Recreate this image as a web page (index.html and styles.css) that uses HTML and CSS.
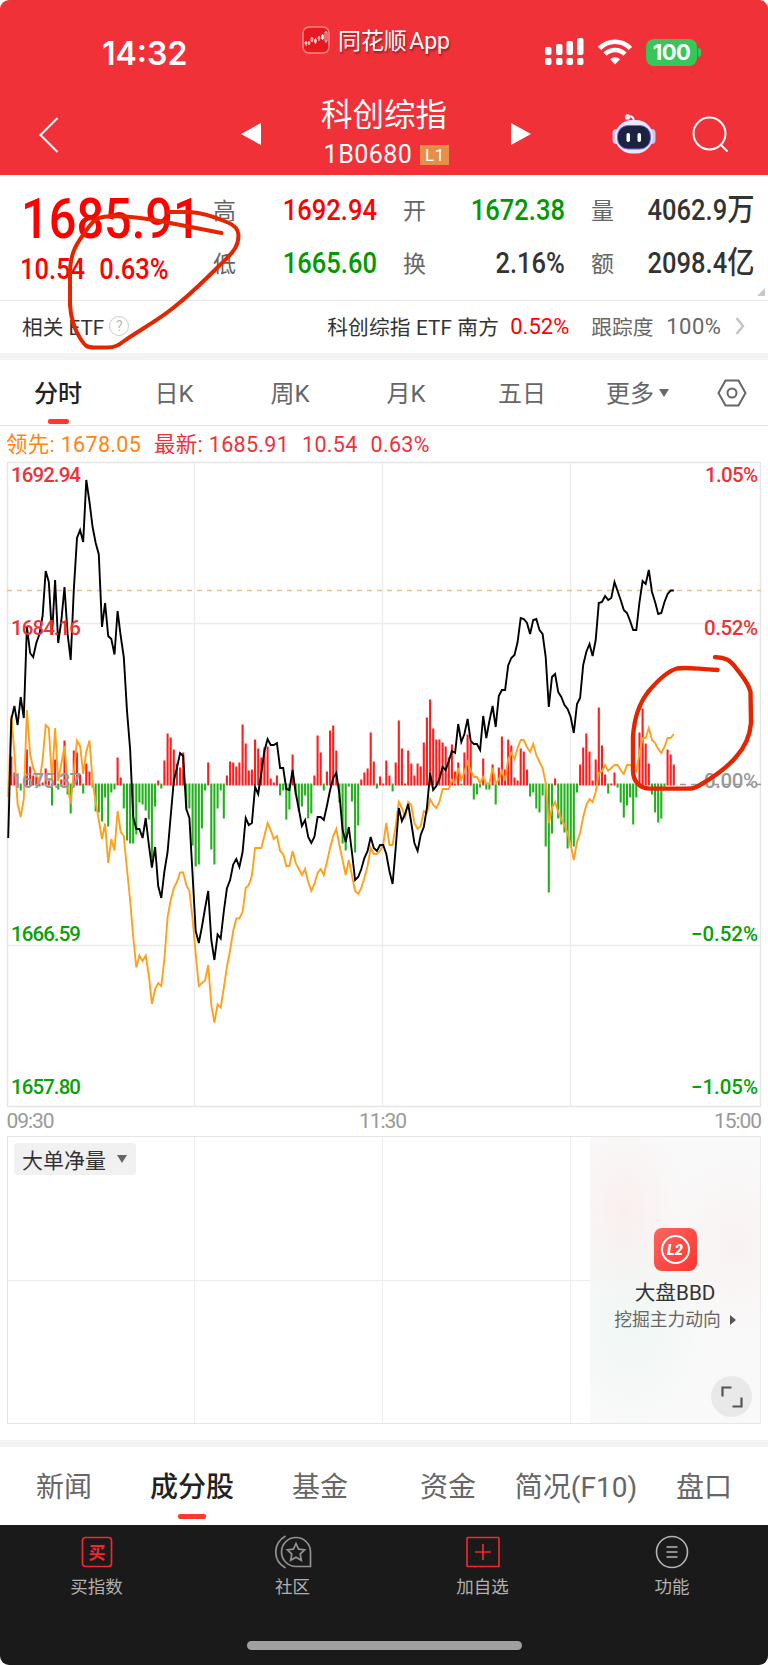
FILE: index.html
```
<!DOCTYPE html>
<html lang="zh-CN">
<head>
    <meta charset="UTF-8">
    <meta name="viewport" content="width=device-width, initial-scale=1.0">
    <title>科创综指 1B0680</title>
    <link rel="stylesheet" href="styles.css">
</head>
<body>
<div class="page">
    <header class="header">
        <div class="status-bar">
            <div class="clock"><span>14:32</span></div>
            <div class="app-name">
                <svg width="28" height="28" viewBox="0 0 28 28">
                    <rect x="1" y="1" width="26" height="26" rx="6" fill="#e5191f" stroke="#ff8587" stroke-width="1.5"/>
                    <g stroke="#fff" stroke-width=".7">
                        <path d="M4 15v5M7 15v4M10 11v5M13.500 12v6M17 10v5M20.500 8v6M24 5v12"/>
                        <path d="M3 16h1.500v2H3zM12.700 13.500h1.500v3h-1.500zM19.800 9h1.500v4h-1.500z" fill="#fff"/>
                        <path d="M6 16h1.800v2H6zM9 12h1.800v3H9zM16 11h1.800v2H16zM23 6h2v9h-2z" fill="#e5191f"/>
                    </g>
                </svg>
                <span>同花顺 App</span>
            </div>
            <div class="status-icons">
                <svg width="39" height="28" viewBox="0 0 39 28" fill="#fff">
                    <rect x="0" y="9" width="6.500" height="8" rx="2"/>
                    <rect x="11" y="6" width="6.500" height="11" rx="2"/>
                    <rect x="21.500" y="3" width="6.500" height="14" rx="2"/>
                    <rect x="32" y="0" width="6.500" height="17" rx="2"/>
                    <rect x="0" y="20" width="6.500" height="7" rx="2"/>
                    <rect x="11" y="20" width="6.500" height="7" rx="2"/>
                    <rect x="21.500" y="20" width="6.500" height="7" rx="2"/>
                    <rect x="32" y="20" width="6.500" height="7" rx="2"/>
                </svg>
                <svg width="34" height="26" viewBox="0 0 34 26" fill="none" stroke="#fff" stroke-width="4.600">
                    <path d="M1.500 9.500C10 .5 24 .5 32.500 9.500"/>
                    <path d="M7 15.200c5.500-5.600 14.500-5.600 20 0"/>
                    <path d="M17 25.500l-5-5.200c2.600-2.900 7.400-2.900 10 0z" fill="#fff" stroke="none"/>
                </svg>
                <div class="battery"><span>100</span></div>
            </div>
        </div>
        <div class="nav-bar">
            <svg class="back" width="20" height="36" viewBox="0 0 20 36" fill="none" stroke="#fff" stroke-width="2"><path d="M18.500 1L1.500 18l17 17"/></svg>
            <svg class="prev" width="20" height="22" viewBox="0 0 20 22" fill="#fff"><path d="M20 0v22L0 11z"/></svg>
            <div class="stock-title">
                <h1>科创综指</h1>
                <div class="stock-code">1B0680 <span>L1</span></div>
            </div>
            <svg class="next" width="20" height="22" viewBox="0 0 20 22" fill="#fff"><path d="M0 0v22l20-11z"/></svg>
            <svg class="robot" width="44" height="40" viewBox="0 0 44 40">
                <path d="M15 2.500c5-1 7 1 7 5" fill="none" stroke="#f1eeff" stroke-width="2"/>
                <circle cx="15.500" cy="3" r="2.700" fill="#f1eeff"/>
                <rect x="0.500" y="15" width="8" height="15" rx="4" fill="#c9c6f3"/>
                <rect x="35.500" y="15" width="8" height="15" rx="4" fill="#c9c6f3"/>
                <rect x="3" y="6" width="38" height="33.500" rx="17" fill="#e9e8ff"/>
                <rect x="5.500" y="11.500" width="33" height="23.500" rx="10.500" fill="#1b2340" stroke="#7b62e8" stroke-width="1"/>
                <rect x="14.500" y="19" width="3.500" height="9" rx="1.700" fill="#fff"/>
                <rect x="25.500" y="19" width="3.500" height="9" rx="1.700" fill="#fff"/>
            </svg>
            <svg class="search" width="37" height="37" viewBox="0 0 37 37" fill="none" stroke="#fff" stroke-width="2"><circle cx="17.500" cy="17.500" r="16"/><path d="M28.500 28.500l7 7"/></svg>
        </div>
    </header>

    <section class="quote">
        <div class="price">
            <div class="price-now num">1685.91</div>
            <div class="price-change"><span class="num">10.54</span><span class="num">0.63%</span></div>
        </div>
        <dl class="stats">
            <div><dt>高</dt><dd class="num up">1692.94</dd></div>
            <div><dt>开</dt><dd class="num down">1672.38</dd></div>
            <div><dt>量</dt><dd class="num">4062.9<b>万</b></dd></div>
            <div><dt>低</dt><dd class="num down">1665.60</dd></div>
            <div><dt>换</dt><dd class="num">2.16%</dd></div>
            <div><dt>额</dt><dd class="num">2098.4<b>亿</b></dd></div>
        </dl>
        <i class="corner"></i>
    </section>

    <section class="etf">
        <span>相关 ETF</span>
        <span class="help">?</span>
        <span class="etf-name">科创综指 ETF 南方</span>
        <span class="etf-rate">0.52%</span>
        <span class="etf-track">跟踪度</span>
        <span class="etf-full">100%</span>
        <svg width="10" height="18" viewBox="0 0 10 18" fill="none" stroke="#c4c4c4" stroke-width="2.500"><path d="M1.500 1l6.500 8-6.500 8"/></svg>
    </section>

    <nav class="period-tabs">
        <span class="active">分时</span>
        <span>日K</span>
        <span>周K</span>
        <span>月K</span>
        <span>五日</span>
        <span class="more">更多<i class="caret"></i></span>
        <svg width="30" height="28" viewBox="0 0 30 28" fill="none" stroke="#666" stroke-width="2"><path d="M8.500 1.500h13L28.500 14l-7 12.500h-13L1.500 14z"/><circle cx="15" cy="14" r="4.500"/></svg>
    </nav>

    <div class="legend">
        <span class="lead">领先: 1678.05</span>
        <span>最新: 1685.91</span>
        <span>10.54</span>
        <span>0.63%</span>
    </div>

    <svg class="chart" id="chart" width="768" height="675" viewBox="0 461 768 675">
        <path d="M7 623.500h754M7 945.500h754M194.500 462v644M382.500 462v644M570.500 462v644" stroke="#ececec" stroke-width="1.300"/>
        <rect x="7.500" y="462.500" width="753" height="644" fill="none" stroke="#e6e6e6" stroke-width="1.500"/>
        <path d="M7 590.500h754" stroke="#e3c48f" stroke-width="1.300" stroke-dasharray="5 5"/>
        <path d="M680 784.500h81" stroke="#999" stroke-width="1.300" stroke-dasharray="6 5"/>
        <g id="bars" stroke-width="2.100"></g>
        <polyline id="avgLine" fill="none" stroke="#ffa11e" stroke-width="1.900"/>
        <polyline id="priceLine" fill="none" stroke="#000" stroke-width="1.900"/>
        <g class="axis">
            <text x="11" y="482" textLength="70" fill="#eb3338">1692.94</text>
            <text x="11" y="635" textLength="70" fill="#eb3338">1684.16</text>
            <text x="11" y="788" textLength="70" fill="#999">1675.37</text>
            <text x="11" y="941" textLength="70" fill="#09a009">1666.59</text>
            <text x="11" y="1094" textLength="70" fill="#09a009">1657.80</text>
            <text x="705" y="482" textLength="53" fill="#eb3338">1.05%</text>
            <text x="704" y="635" textLength="54" fill="#eb3338">0.52%</text>
            <text x="704" y="788" textLength="54" fill="#999">0.00%</text>
            <text x="691" y="941" textLength="67" fill="#09a009">−0.52%</text>
            <text x="691" y="1094" textLength="67" fill="#09a009">−1.05%</text>
        </g>
        <g class="times">
            <text x="6.500" y="1128" textLength="48">09:30</text>
            <text x="359" y="1128" textLength="48">11:30</text>
            <text x="714" y="1128" textLength="48">15:00</text>
        </g>
    </svg>

    <section class="sub-chart">
        <div class="grid-cell"><button class="indicator">大单净量<i class="caret"></i></button></div>
        <div class="grid-cell"></div>
        <div class="grid-cell"></div>
        <div class="grid-cell"></div>
        <div class="promo">
            <svg width="43" height="43" viewBox="0 0 43 43">
                <defs><linearGradient id="l2" x1="0" y1="0" x2="1" y2="1"><stop offset="0" stop-color="#ff6560"/><stop offset="1" stop-color="#fb352e"/></linearGradient></defs>
                <rect width="43" height="43" rx="8" fill="url(#l2)"/>
                <circle cx="21.500" cy="21.500" r="13.500" fill="none" stroke="#fff" stroke-width="2"/>
                <text x="13" y="27" textLength="16" lengthAdjust="spacingAndGlyphs" class="l2-text">L2</text>
            </svg>
            <strong>大盘BBD</strong>
            <p>挖掘主力动向<i></i></p>
            <div class="expand">
                <svg width="22" height="22" viewBox="0 0 22 22" fill="none" stroke="#555" stroke-width="2.200"><path d="M1.500 10.500v-9h9M20.500 11.500v9h-9"/></svg>
            </div>
        </div>
    </section>

    <nav class="info-tabs">
        <span>新闻</span>
        <span class="active">成分股</span>
        <span>基金</span>
        <span>资金</span>
        <span>简况(F10)</span>
        <span>盘口</span>
    </nav>

    <footer class="footer">
        <div class="toolbar">
            <div>
                <svg width="32" height="34" viewBox="0 0 32 34"><rect x="1.500" y="2.500" width="29" height="29" rx="3" fill="none" stroke="#f0282f" stroke-width="1.700"/><text x="16" y="23.500" text-anchor="middle" class="buy-text">买</text></svg>
                <span>买指数</span>
            </div>
            <div>
                <svg width="38" height="34" viewBox="0 0 38 34" fill="none" stroke="#929292" stroke-width="1.700">
                    <path d="M11.500 1C-1.500 8.500-1.500 25.500 11.500 33"/>
                    <path d="M22 2.500a14.500 14.500 0 1 0 0 29h14.500V17A14.500 14.500 0 0 0 22 2.500z"/>
                    <path d="M22 8.500l2.600 5.600 6 .8-4.400 4.200 1.100 6.200-5.300-3-5.300 3 1.100-6.200-4.400-4.200 6-.8z"/>
                </svg>
                <span>社区</span>
            </div>
            <div>
                <svg width="34" height="34" viewBox="0 0 34 34" fill="none" stroke="#f0282f" stroke-width="1.700"><rect x="1" y="2.500" width="32" height="29" rx="1"/><path d="M17 9v16M9 17h16"/></svg>
                <span>加自选</span>
            </div>
            <div>
                <svg width="34" height="34" viewBox="0 0 34 34" fill="none" stroke="#b5b5b5" stroke-width="1.600"><circle cx="17" cy="17" r="15.500"/><path d="M11.500 12h11M11.500 17h11M11.500 22h11"/></svg>
                <span>功能</span>
            </div>
        </div>
        <div class="home-indicator"></div>
    </footer>

    <!-- hand drawn marks over the page -->
    <svg class="marks" width="768" height="1665" viewBox="0 0 768 1665" fill="none" stroke="#e42600" stroke-linecap="round" stroke-linejoin="round">
        <path stroke-width="4" d="M221.500 233L165 222C140 217 120 216 107 216.500C95 217 91 223 83 235C75 246 70 255 70 275L70 305C71 320 75 330 80 338C85 346 87 347.500 94 347.500L107 347.500C115 347.500 119 345 124 341C135 333 160 319 173 308C186 298 205 280 222 263C236 250 238.500 244 238.500 235C238 228 234 225 228 222.500C215 217 200 212.500 190 212L168 212"/>
        <path stroke-width="4.400" d="M715 657.300C725 657 730 660 736 668C742 676 748 682 750.500 692L751 723C750 736 745 747 736 757C725 770 712 778 700 785C694 788.600 692 788.600 688 788.600L650 788.600C640 788.600 633 782 633 770L633 737C634 720 638 705 648 692C658 680 668 671 677 668.500C685 667 692 668.500 717.500 670"/>
    </svg>
</div>

<script>
// one value per trading minute, in chart coordinates
const price = [
    838, 719.5, 706, 725, 697, 718, 626.5, 653, 657, 643, 634, 616, 571, 582, 635, 580, 643, 621, 587, 634,
    660, 590, 538, 530, 542, 480, 502, 527, 543, 554.5, 627, 603, 636, 639, 654.5, 611, 636, 657, 711, 749,
    817, 829, 829, 838, 818, 844.5, 867.5, 847, 886, 898, 871.5, 852, 816, 781, 768, 753, 756, 809, 818, 875,
    931, 943, 927, 908, 891, 940, 960, 934.5, 938.5, 911.5, 888.5, 880, 864.5, 859, 867, 852, 818, 825, 823, 787,
    794, 773, 751, 739, 745, 745, 743, 768, 768, 789, 790, 770, 793, 809, 826, 820, 837, 843, 837, 817,
    817, 820, 806, 790, 778, 773, 794, 830, 842, 827, 852, 880, 877, 869, 858, 851, 837, 848, 851, 845,
    845, 854, 871, 884, 848, 808, 821, 814, 804, 823, 843, 851, 835, 827, 808, 773, 790, 786, 779, 767,
    770, 761, 751, 753, 724, 742, 734, 719, 741, 744, 744, 750, 716, 738, 721, 706, 727, 696, 690, 690,
    665.5, 658, 655, 642, 618, 619, 623, 634, 620, 619, 630, 634, 657, 707, 677, 674, 692, 697, 705, 709,
    717, 733, 704, 698, 665, 652, 644, 656, 640, 603, 602, 596, 600, 598, 582, 591, 600, 610, 613, 621,
    630, 630, 602, 581, 584, 570, 592, 602, 614, 613, 602, 594, 590.5, 590.5
];
const average = [
    797, 715.5, 753, 804, 817, 799, 710, 754, 768, 775, 781, 760, 725, 728, 780, 728, 781, 764, 746, 785,
    804, 772, 740.5, 746, 774, 751.5, 740.5, 781.5, 802.5, 820, 839, 823.5, 863, 839, 850.5, 811, 832, 836, 869.5, 900,
    936.5, 967.5, 955.5, 961, 955.5, 975, 1004, 989, 983, 986, 959, 917, 900, 888, 882, 872.5, 872.5, 885, 891, 919,
    954, 986, 983, 980.5, 965, 1005, 1022.5, 1004.5, 1007.5, 988, 967, 950.5, 931, 918.5, 918.5, 912, 888, 885, 875.5, 848,
    848, 848, 836, 823, 830, 839, 836, 851, 854, 866, 866, 851, 863, 869, 875, 869, 882, 891, 884, 873,
    869, 875, 862, 848, 836, 829, 845, 860, 875, 860, 875, 891, 894, 888, 878, 866, 848, 854, 854, 851,
    845, 823, 845, 845, 826, 802, 808, 817, 802, 805, 823, 829, 826, 811, 813, 799, 805, 808, 802, 789,
    789, 789, 780, 783, 768, 780, 772, 762, 771, 777, 777, 783, 777, 783.5, 783.5, 768, 783, 780, 771, 780.5,
    759, 753, 759, 748, 740, 740, 747, 752, 744, 755, 762, 768, 783, 823, 808, 802, 812, 819, 825, 833,
    845, 860, 842, 833, 817, 805, 799, 802, 792, 773, 771, 765, 771, 768, 765, 765, 770, 774, 765, 765,
    767, 771, 753, 738, 738, 728, 740, 743, 749, 753, 747, 738, 738, 734
];
const volume = [
    0, 28, 12, 1, -6, 0, 35, 18, 9, 8, -2, 2, 16, 4, -21, 25, -5, 5, 44, -10,
    -29, 34, 32, 10, -9, 21, 13, -3, -27, -28, -37, -13, -42, -8, -5, 27, 7, -24, -56, -59,
    -59, -50, -18, -20, -26, -35, -74, -22, 4, -4, 24, 51, 47, 35, 21, 17, 32, -24, -24, -61,
    -82, -80, -44, -6, 22, -65, -80, -24, -6, -34, 9, 23, 22, 18, 22, 60, 41, 14, 15, 45,
    36, 27, 37, 38, 6, 2, 9, -11, -6, -35, -25, 30, -10, -27, -22, -11, -34, -29, 9, 49,
    32, -6, 13, 54, 59, 34, -18, -59, -66, -2, -17, -68, -41, 5, 12, 16, 52, 23, -4, 8,
    1, 24, 9, -7, 22, 64, 36, 1, 34, 21, 9, 21, 18, 42, 67, 85, 56, 45, 45, 42,
    38, 27, 40, 13, 22, -1, 32, 50, 42, -15, -10, -3, 26, -5, -5, 20, -20, 17, 48, 15,
    45, 39, 7, 4, 36, 33, 15, -12, -8, -24, -28, -11, -62, -108, -49, 6, -34, -40, -48, -64,
    -62, -62, -8, 20, 37, 51, 33, 4, 25, 77, 39, 10, -9, 1, 12, -3, -18, -33, -21, -13,
    -40, -13, 52, 76, 41, 21, -10, -28, -38, -34, -2, 35, 30, 20
];

const baseline = 784.5;
const minuteX = i => (8.2 + i * 3.125).toFixed(1);
const toPoints = values => values.map((y, i) => minuteX(i) + ',' + y).join(' ');

document.getElementById('priceLine').setAttribute('points', toPoints(price));
document.getElementById('avgLine').setAttribute('points', toPoints(average));

const bars = document.getElementById('bars');
volume.forEach((v, i) => {
    if (v === 0) return;
    const bar = document.createElementNS('http://www.w3.org/2000/svg', 'path');
    const start = v > 0 ? baseline + 1 : baseline - 1;
    bar.setAttribute('d', `M${minuteX(i)} ${start}V${baseline - v}`);
    bar.setAttribute('stroke', v > 0 ? '#ff1c1c' : '#22b01c');
    bars.appendChild(bar);
});
</script>
</body>
</html>
```

FILE: styles.css
```
* {
    box-sizing: border-box;
}

body {
    margin: 0;
    background: #fff;
    color: #333;
    font-family: Roboto, "Noto Sans CJK SC", sans-serif;
}

h1, dl, dd, p {
    margin: 0;
}

svg {
    display: block;
    flex: none;
}

.page {
    position: relative;
    width: 768px;
    height: 1665px;
    overflow: hidden;
}

.num {
    font-weight: 500;
    white-space: nowrap;
}

/* header */
.header {
    height: 175px;
    background: #f13138;
    border-radius: 9px 9px 0 0;
    color: #fff;
}

.status-bar {
    display: grid;
    grid-template-columns: 302px 243px 1fr;
    height: 97px;
}

.clock {
    padding: 34px 0 0 102px;
    font: 600 32px/39px Inter, sans-serif;
}

.clock span {
    display: inline-block;
}

.app-name {
    display: flex;
    align-items: center;
    gap: 8px;
    height: 28px;
    margin-top: 26px;
    font-size: 23px;
    letter-spacing: -0.1px;
    word-spacing: -3px;
    text-shadow: 1px 2px 2px rgba(0, 0, 0, 0.4);
    white-space: nowrap;
}

.app-name span {
    margin-top: -2px;
}

.status-icons {
    display: flex;
    align-items: center;
    gap: 14px;
    height: 28px;
    margin-top: 38px;
}

.battery {
    position: relative;
    width: 51px;
    height: 27px;
    border-radius: 8px;
    background: #34c759;
    font: 700 22px/27px Inter, sans-serif;
    text-align: center;
    letter-spacing: -0.5px;
}

.battery::after {
    content: "";
    position: absolute;
    left: 52px;
    top: 9px;
    width: 3px;
    height: 9px;
    border-radius: 0 3px 3px 0;
    background: #34c759;
}

.nav-bar {
    display: flex;
    align-items: flex-start;
    padding-left: 39px;
}

.back {
    margin-top: 20px;
}

.prev {
    margin: 26px 0 0 182px;
}

.stock-title {
    width: 249px;
    text-align: center;
}

.stock-title h1 {
    margin-left: -3px;
    font-size: 31.5px;
    font-weight: 400;
    line-height: 38px;
}

.stock-code {
    display: flex;
    justify-content: center;
    align-items: center;
    gap: 8px;
    padding: 2px 0 0 2px;
    font-size: 25px;
    letter-spacing: 0.5px;
    line-height: 36px;
}

.stock-code span {
    width: 29px;
    height: 20px;
    background: #e78f49;
    font-size: 17px;
    line-height: 20px;
}

.next {
    margin: 26px 0 0 1px;
}

.robot {
    margin: 17px 0 0 81px;
}

.search {
    margin: 19px 0 0 36px;
}

/* quote */
.quote {
    position: relative;
    display: flex;
    height: 126px;
    border-bottom: 1px solid #e8e8e8;
}

.price {
    width: 213px;
    padding-left: 21px;
    color: #f00;
}

.price-now {
    height: 66px;
    padding-top: 11px;
    font-size: 56px;
    line-height: 66px;
    transform: scaleX(0.87);
    transform-origin: left;
}

.price-change {
    display: flex;
    gap: 16px;
    margin-top: 12px;
    font-size: 29px;
    line-height: 32px;
    transform: scaleX(0.88);
    transform-origin: left;
    margin-left: -1px;
}

.stats {
    display: grid;
    grid-template-columns: 164px 162px 163px;
    grid-auto-rows: 53px;
    column-gap: 26px;
    padding-top: 8px;
}

.stats div {
    display: flex;
    justify-content: space-between;
    align-items: center;
}

.stats dt {
    position: relative;
    top: -1px;
    color: #666;
    font-size: 23px;
    font-weight: 400;
}

.stats dd {
    font-size: 29px;
    line-height: 50px;
    transform: scaleX(0.88);
    transform-origin: right;
}

.stats b {
    font-size: 31px;
    font-weight: 500;
    line-height: 1;
}

.stats .up {
    color: #f00;
}

.stats .down {
    color: #009a00;
}

.corner {
    position: absolute;
    right: 3px;
    bottom: 4px;
    border: 4.5px solid;
    border-color: transparent #c8c8c8 #c8c8c8 transparent;
}

/* related etf */
.etf {
    display: flex;
    align-items: center;
    height: 52px;
    padding: 0 0 2px 22px;
    font-size: 20.7px;
    white-space: nowrap;
}

.help {
    width: 20px;
    height: 20px;
    margin-left: 5px;
    border: 1.5px solid #ccc;
    border-radius: 50%;
    color: #bbb;
    font-size: 14px;
    line-height: 18px;
    text-align: center;
}

.etf-name {
    width: 183px;
    margin-left: 198px;
    letter-spacing: 0.15px;
}

.etf-rate {
    width: 81px;
    color: #f00;
    font-size: 22px;
}

.etf-track {
    width: 75px;
    color: #666;
}

.etf-full {
    width: 69px;
    color: #666;
    font-size: 22px;
    letter-spacing: 0.5px;
}

/* period tabs */
.period-tabs {
    display: grid;
    grid-template-columns: repeat(6, 116px) 1fr;
    align-items: center;
    justify-items: center;
    height: 73px;
    border-top: 7px solid #f4f4f4;
    border-bottom: 1px solid #e8e8e8;
    color: #666;
    font-size: 24px;
}

.period-tabs span {
    position: relative;
    padding-top: 2px;
    line-height: 36px;
}

.period-tabs .more {
    margin-right: 16px;
}

.period-tabs .active,
.info-tabs .active {
    color: #222;
    font-weight: 500;
}

.period-tabs .active::after,
.info-tabs .active::after {
    content: "";
    position: absolute;
    left: 50%;
    bottom: -12px;
    width: 21px;
    height: 5px;
    margin-left: -10.5px;
    border-radius: 2px;
    background: #ff382e;
}

.caret {
    display: inline-block;
    border: 5.5px solid transparent;
    border-top: 8px solid #666;
    border-bottom: 0;
}

.period-tabs .caret {
    position: absolute;
    left: 53px;
    top: 15px;
}

.legend {
    display: flex;
    height: 35px;
    padding-left: 6px;
    gap: 13px;
    color: #eb3338;
    font-size: 21.5px;
    letter-spacing: 0.3px;
    line-height: 38px;
    white-space: nowrap;
}

.legend .lead {
    color: #ff8410;
}

/* charts */
.chart text {
    font-family: Roboto, sans-serif;
}

.axis {
    font-size: 20.5px;
    font-weight: 500;
}

.times {
    font-size: 21px;
    fill: #999;
}

.sub-chart {
    position: relative;
    display: grid;
    grid-template-columns: 187px 188px 188px 190px;
    height: 288px;
    margin: 0 7px;
    border: 1.5px solid #e6e6e6;
}

.grid-cell {
    border-right: 1px solid #ececec;
    background: linear-gradient(#ececec, #ececec) 0 143px / 100% 1px no-repeat;
}

.indicator {
    display: flex;
    align-items: center;
    gap: 11px;
    width: 122px;
    height: 32px;
    margin: 6px;
    padding: 0 8px 1px;
    border: 0;
    border-radius: 4px;
    background: #f1f1f1;
    color: #333;
    font: 21px Roboto, "Noto Sans CJK SC", sans-serif;
    white-space: nowrap;
}

.promo {
    position: absolute;
    top: 0;
    right: 0;
    bottom: 0;
    width: 170px;
    display: flex;
    flex-direction: column;
    align-items: center;
    padding-top: 91px;
    background:
        radial-gradient(ellipse at 20% 26%, rgba(255, 200, 200, 0.2), transparent 32%),
        radial-gradient(ellipse at 85% 38%, rgba(255, 200, 200, 0.15), transparent 36%),
        radial-gradient(ellipse at 25% 64%, rgba(200, 240, 225, 0.2), transparent 42%),
        #f9f9f9;
}

.promo strong {
    margin-top: 7px;
    font-size: 20.7px;
    font-weight: 400;
    line-height: 30px;
}

.promo p {
    display: flex;
    align-items: center;
    gap: 9px;
    color: #666;
    font-size: 17.8px;
    line-height: 24px;
}

.promo p i {
    border: 5px solid transparent;
    border-left: 6px solid #555;
    border-right: 0;
}

.l2-text {
    fill: #fff;
    font: italic 900 15px Roboto, sans-serif;
}

.expand {
    position: absolute;
    right: 8px;
    bottom: 6px;
    display: flex;
    align-items: center;
    justify-content: center;
    width: 41px;
    height: 41px;
    border-radius: 50%;
    background: #e9e9e9;
}

/* bottom tabs */
.info-tabs {
    display: grid;
    grid-template-columns: repeat(6, 128px);
    align-items: center;
    justify-items: center;
    height: 85px;
    margin-top: 16px;
    border-top: 7px solid #f4f4f4;
    color: #666;
    font-size: 28px;
    white-space: nowrap;
}

.info-tabs span {
    position: relative;
    padding-top: 4px;
    line-height: 40px;
}

.info-tabs .active::after {
    bottom: -11px;
    width: 28px;
    margin-left: -14px;
}

.footer {
    height: 140px;
    background: #1a1a1a;
    border-radius: 0 0 9px 9px;
}

.toolbar {
    display: grid;
    grid-template-columns: 193px 199px 181px 198px;
    height: 116px;
    padding-top: 10px;
    color: #b0b0b0;
    font-size: 17.5px;
    line-height: 26px;
}

.toolbar div {
    display: flex;
    flex-direction: column;
    align-items: center;
    gap: 5px;
}

.buy-text {
    fill: #f0282f;
    font: 700 17px "Noto Sans CJK SC", sans-serif;
}

.home-indicator {
    width: 275px;
    height: 9px;
    margin: 0 auto;
    border-radius: 5px;
    background: #a0a0a0;
}

.marks {
    position: absolute;
    left: 0;
    top: 0;
    pointer-events: none;
}
```
